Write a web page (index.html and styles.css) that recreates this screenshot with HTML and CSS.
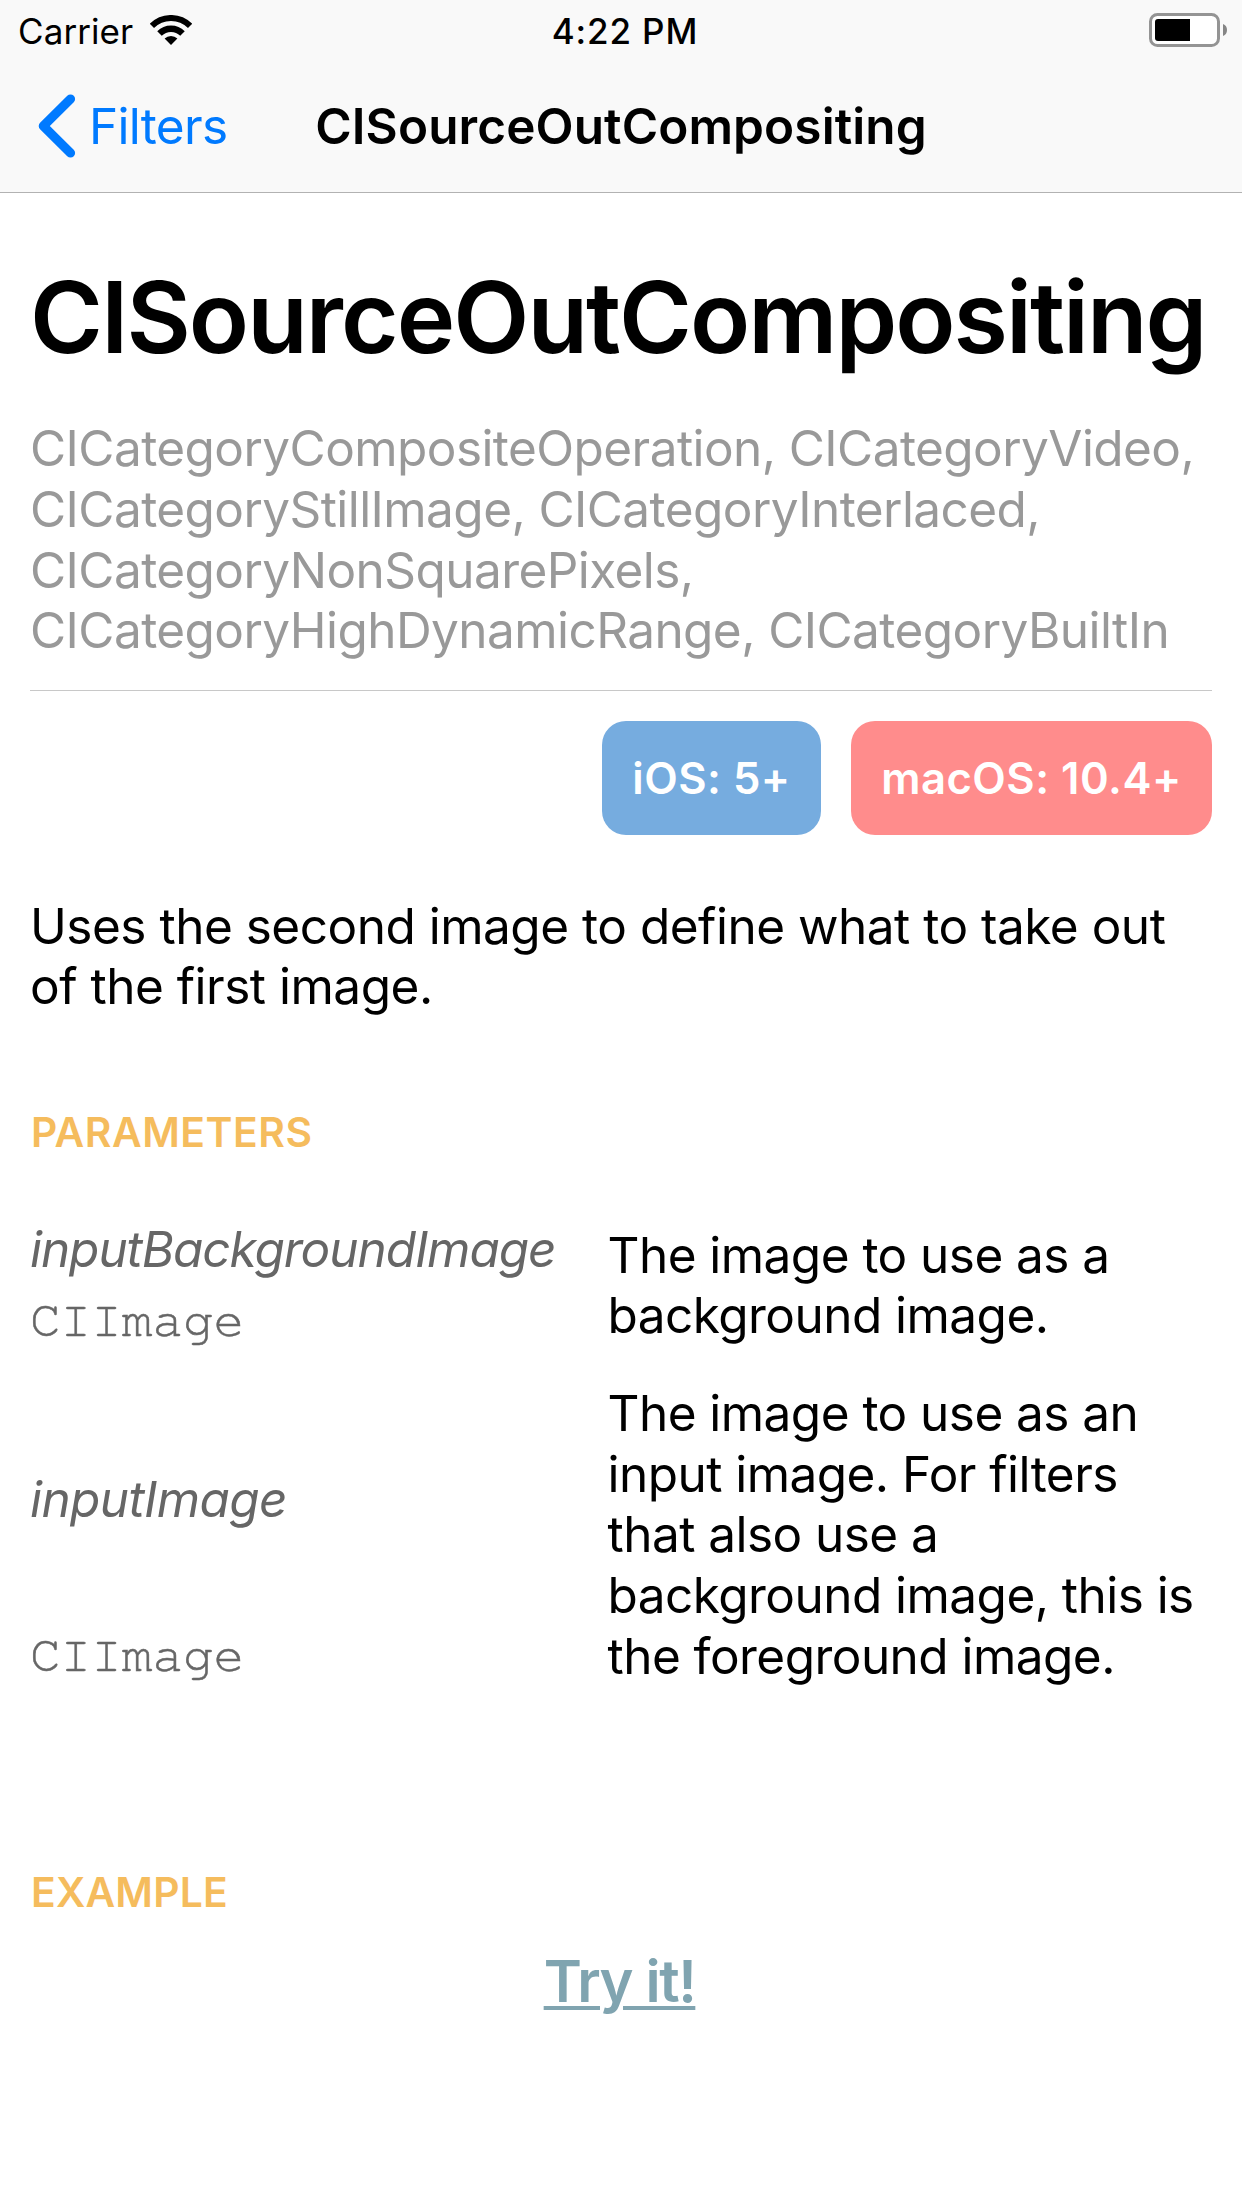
FILE: index.html
```
<!DOCTYPE html>
<html lang="en">
<head>
<meta charset="utf-8">
<title>CISourceOutCompositing</title>
<link rel="stylesheet" href="styles.css">
</head>
<body>
<header class="header">
  <div class="status">
    <div class="status-left">
      <span class="carrier">Carrier</span>
      <svg class="wifi" width="42" height="30" viewBox="0 0 42 30">
        <path d="M1.9 10.9A27 27 0 0 1 40.1 10.9" fill="none" stroke="#000" stroke-width="6"/>
        <path d="M9.5 18.5A16.3 16.3 0 0 1 32.5 18.5" fill="none" stroke="#000" stroke-width="6.4"/>
        <path d="M21 30L14.6 23.6A9 9 0 0 1 27.4 23.6Z"/>
      </svg>
    </div>
    <span class="time">4:22 PM</span>
    <svg class="battery" width="78" height="34" viewBox="0 0 78 34">
      <rect x="1.5" y="1.5" width="68" height="31" rx="7" fill="#fff" stroke="#949494" stroke-width="3"/>
      <path d="M9 6H41V28H9A3 3 0 0 1 6 25V9A3 3 0 0 1 9 6Z"/>
      <path d="M74 11Q78 12.5 78 17T74 23Z" fill="#868686"/>
    </svg>
  </div>
  <nav class="nav">
    <a class="back">
      <svg width="38" height="64" viewBox="0 0 38 64">
        <path d="M32.5 5L5.3 32L32.5 59" fill="none" stroke="#007aff" stroke-width="9.2" stroke-linecap="round" stroke-linejoin="round"/>
      </svg>
      <span>Filters</span>
    </a>
    <span class="nav-title">CISourceOutCompositing</span>
  </nav>
</header>
<main class="content">
  <h1 class="title">CISourceOutCompositing</h1>
  <p class="categories">CICategoryCompositeOperation, CICategoryVideo, CICategoryStillImage, CICategoryInterlaced, CICategoryNonSquarePixels, CICategoryHighDynamicRange, CICategoryBuiltIn</p>
  <hr class="rule">
  <div class="badges">
    <span class="badge ios">iOS: 5+</span>
    <span class="badge macos">macOS: 10.4+</span>
  </div>
  <p class="description">Uses the second image to define what to take out of the first image.</p>
  <h2 class="heading">PARAMETERS</h2>
  <div class="params">
    <section class="param">
      <div class="key">
        <span class="name name-long">inputBackgroundImage</span>
        <span class="type">CIImage</span>
      </div>
      <p class="detail">The image to use as a background image.</p>
    </section>
    <section class="param param-tall">
      <div class="key">
        <span class="name">inputImage</span>
        <span class="type">CIImage</span>
      </div>
      <p class="detail">The image to use as an input image. For filters that also use a background image, this is the foreground image.</p>
    </section>
  </div>
  <h2 class="heading heading-example">EXAMPLE</h2>
  <a class="try">Try it!</a>
</main>
</body>
</html>
```
FILE: styles.css
```
* { box-sizing: border-box; margin: 0; padding: 0; }
body {
  width: 1242px;
  min-height: 2208px;
  background: #fff;
  color: #000;
  font: 400 49.5px/60.75px Inter, sans-serif;
  letter-spacing: -0.54px;
}
.header { height: 193px; background: #f9f9f9; border-bottom: 1px solid #b2b2b2; }
.status {
  display: grid;
  grid-template-columns: 1fr auto 1fr;
  align-items: center;
  height: 62px;
  padding: 0 15px 0 18px;
  font-size: 35px;
}
.status-left { display: flex; align-items: center; gap: 17px; }
.wifi { margin-top: -2px; }
.carrier { letter-spacing: 0.08px; }
.time { font-weight: 500; letter-spacing: 0.87px; margin-left: 6px; margin-right: 1px; }
.battery { justify-self: end; margin-top: -2px; }
.nav {
  display: grid;
  grid-template-columns: 1fr auto 1fr;
  align-items: center;
  height: 130px;
  padding: 0 38px 2px;
}
.back { display: flex; align-items: center; gap: 13px; color: #007aff; letter-spacing: -0.69px; }
.nav-title { font-weight: 600; letter-spacing: 0.1px; }
.content { display: flex; flex-direction: column; padding: 64px 30px 0; }
.title { font-size: 99px; line-height: 120px; font-weight: 600; letter-spacing: -1.965px; white-space: nowrap; }
.categories { margin-top: 41px; color: #999; letter-spacing: -0.57px; }
.rule { height: 1px; margin-top: 29px; border: 0; background: #c8c8c8; }
.badges { display: flex; justify-content: flex-end; gap: 30px; margin-top: 30px; }
.badge {
  display: flex;
  align-items: center;
  justify-content: center;
  height: 114px;
  padding-top: 2px;
  border-radius: 24px;
  color: #fff;
  font-size: 43.6px;
  font-weight: 600;
  letter-spacing: 0.5px;
}
.ios { width: 219px; background: #76acdf; }
.macos { width: 361px; background: #ff8c8c; }
.description { margin-top: 60.5px; padding-right: 20px; letter-spacing: -0.49px; }
.heading { margin-top: 90px; padding-left: 1px; color: #f5bc5d; font-size: 40.8px; line-height: 50px; font-weight: 600; letter-spacing: 0.54px; }
.params { display: grid; gap: 31.7px; margin-top: 62px; }
.param { display: grid; grid-template-columns: 577px 1fr; }
.key { display: flex; flex-direction: column; gap: 11.5px; color: #666; }
.name { font-style: italic; letter-spacing: -0.62px; }
.name-long { letter-spacing: -1.08px; }
.type { font: 51px/60px FreeMono, "Liberation Mono", monospace; letter-spacing: 0; -webkit-text-stroke: 0.5px #666; }
.detail { padding: 5.5px 4px 0 0.5px; line-height: 60.5px; }
.param-tall .key { gap: 96px; padding-top: 86px; }
.param-tall .detail { padding-top: 0; line-height: 60.75px; }
.heading-example { margin-top: 180px; letter-spacing: 0.2px; }
.try {
  align-self: center;
  margin: 29.5px 3px 0 0;
  color: #80a4b0;
  font-size: 57.8px;
  line-height: 70px;
  font-weight: 600;
  letter-spacing: -1.39px;
  text-decoration: underline;
  text-decoration-thickness: 4px;
  text-underline-offset: 4px;
}
```
